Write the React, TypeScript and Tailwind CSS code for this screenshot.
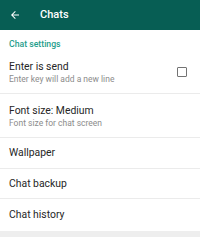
import React from "react";

function Row2({ title, sub, check }: { title: string; sub: string; check?: boolean }) {
  return (
    <div className="h-[44px] border-b border-[#ebebeb] flex items-start pl-[9px] pr-[13px]">
      <div className="flex-1 pt-[11px]">
        <div className="text-[10.4px] leading-[12px] text-[#262626]">{title}</div>
        <div className="text-[8.5px] leading-[12px] text-[#8c8c8c]">{sub}</div>
      </div>
      {check && (
        <div className="mt-[17px] w-[10px] h-[10px] border-[1.5px] border-[#737373] rounded-[1px]" />
      )}
    </div>
  );
}

function Row1({ title, h, border = true }: { title: string; h: string; border?: boolean }) {
  return (
    <div className={`${h} ${border ? "border-b border-[#ebebeb]" : ""} flex items-center pl-[9px]`}>
      <div className="text-[10.4px] leading-[12px] text-[#262626]">{title}</div>
    </div>
  );
}

export default function App() {
  return (
    <div className="w-[200px] h-[237px] bg-white overflow-hidden" style={{ fontFamily: "Roboto, 'Liberation Sans', sans-serif" }}>
      <div className="h-[30px] bg-[#075e54] flex items-center">
        <svg className="ml-[9px]" width="12" height="12" viewBox="0 0 24 24">
          <path d="M20 11H7.83l5.59-5.59L12 4l-8 8 8 8 1.41-1.41L7.83 13H20v-2z" fill="#ffffff" />
        </svg>
        <div className="ml-[19px] text-[11px] font-medium text-white">Chats</div>
      </div>
      <div className="h-[20px] pt-[8px] pl-[9px]">
        <div className="text-[8.7px] leading-[12px] font-medium text-[#1f9e8c]">Chat settings</div>
      </div>
      <Row2 title="Enter is send" sub="Enter key will add a new line" check />
      <Row2 title="Font size: Medium" sub="Font size for chat screen" />
      <Row1 title="Wallpaper" h="h-[31px]" />
      <Row1 title="Chat backup" h="h-[30px]" />
      <Row1 title="Chat history" h="h-[32px]" border={false} />
      <div className="h-[6px] bg-[#eeeeee]" />
    </div>
  );
}
